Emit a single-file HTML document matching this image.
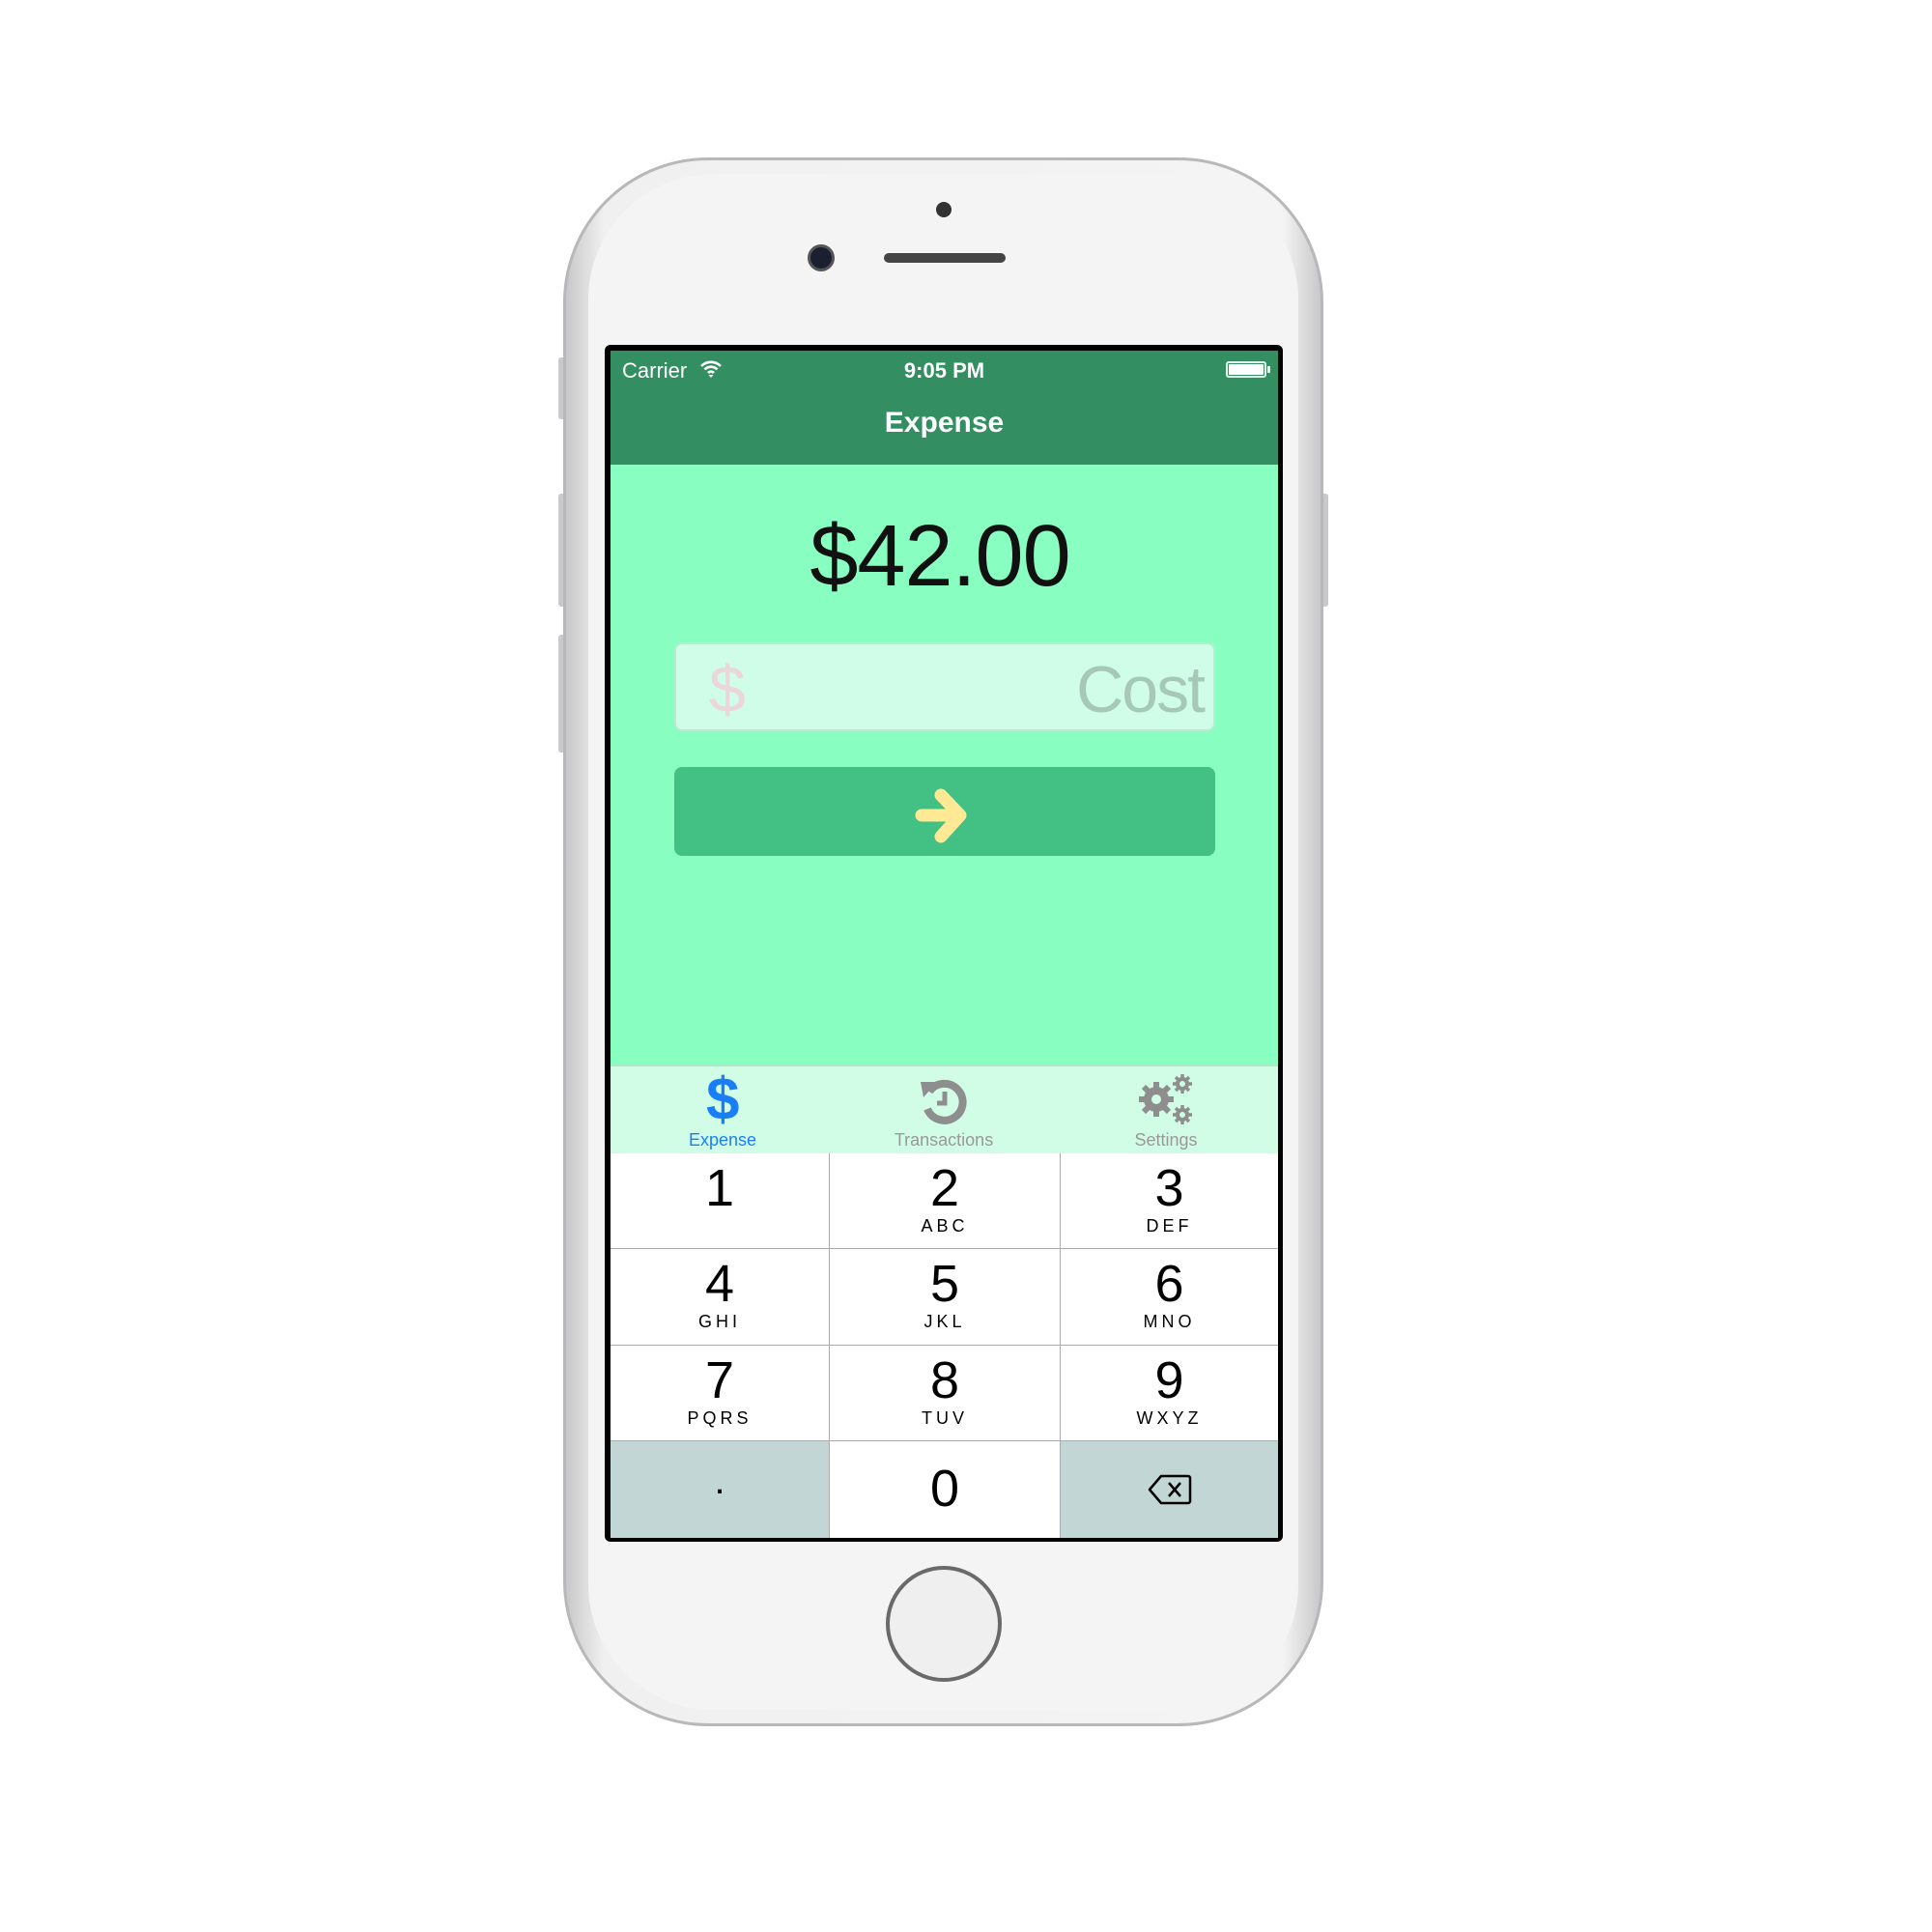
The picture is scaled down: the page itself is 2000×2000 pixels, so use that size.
<!DOCTYPE html>
<html><head><meta charset="utf-8"><style>
*{margin:0;padding:0;box-sizing:border-box}
body{width:2000px;height:2000px;background:#fff;position:relative;overflow:hidden;font-family:"Liberation Sans",sans-serif}
.abs{position:absolute}
.phone{left:583px;top:163px;width:787px;height:1624px;border-radius:150px;background:linear-gradient(90deg,#c8c8ca,#f0f0f0 5%,#f4f4f4 95%,#c8c8ca);border:3px solid #b8b8ba}
.phone2{left:609px;top:180px;width:735px;height:1590px;border-radius:130px;background:#f3f4f3}
.btn{background:#c9c9cb;border-radius:3px}
.screen{left:626px;top:357px;width:702px;height:1239px;background:#000;border-radius:6px}
.key{position:absolute;background:#fff;text-align:center;color:#000}
.key .n{font-size:54px;line-height:54px;margin-top:9px}
.key .l{font-size:18px;letter-spacing:4px;margin-top:2px}
</style></head><body>
<div class="abs btn" style="left:578px;top:370px;width:8px;height:64px"></div>
<div class="abs btn" style="left:578px;top:511px;width:8px;height:117px"></div>
<div class="abs btn" style="left:578px;top:657px;width:8px;height:122px"></div>
<div class="abs btn" style="left:1367px;top:511px;width:8px;height:117px"></div>
<div class="abs phone"></div>
<div class="abs phone2"></div>
<div class="abs" style="left:969px;top:209px;width:16px;height:16px;border-radius:50%;background:#333"></div>
<div class="abs" style="left:836px;top:253px;width:28px;height:28px;border-radius:50%;background:#1a2030;border:3px solid #555"></div>
<div class="abs" style="left:915px;top:262px;width:126px;height:10px;border-radius:5px;background:#444"></div>
<div class="abs" style="left:917px;top:1621px;width:120px;height:120px;border-radius:50%;border:4px solid #6a6a6a;background:#efefef"></div>
<div class="abs screen"></div>
<div class="abs" style="left:632px;top:363px;width:691px;height:1229px;overflow:hidden;background:#88ffc0">
  <div class="abs" style="left:0;top:0;width:691px;height:118px;background:#338f61;color:#fff">
    <div class="abs" style="left:12px;top:8px;font-size:22px">Carrier</div>
    <svg class="abs" style="left:92px;top:9px" width="24" height="20" viewBox="0 0 24 20"><path d="M2 7a14 14 0 0 1 20 0M5.5 10.5a9 9 0 0 1 13 0M9 14a4 4 0 0 1 6 0" stroke="#fff" stroke-width="2.6" fill="none"/><path d="M9.5 16l2.5 3 2.5-3z" fill="#fff"/></svg>
    <div class="abs" style="left:0;width:691px;top:8px;text-align:center;font-size:22px;font-weight:bold">9:05 PM</div>
    <div class="abs" style="left:637px;top:11px;width:42px;height:17px;border:2px solid #dfe;border-radius:3px;padding:1px"><div style="background:#fff;height:100%;border-radius:1px"></div></div>
    <div class="abs" style="left:680px;top:16px;width:3px;height:7px;background:#dfe"></div>
    <div class="abs" style="left:0;width:691px;top:58px;text-align:center;font-size:30px;font-weight:bold">Expense</div>
  </div>
  <div class="abs" style="left:0;width:682px;top:162px;text-align:center;font-size:90px;color:#111;letter-spacing:-1px">$42.00</div>
  <div class="abs" style="left:66px;top:302px;width:560px;height:92px;background:#d0fde7;border:2px solid #b6eccf;border-radius:8px">
    <div class="abs" style="left:34px;top:8px;font-size:68px;color:#ecd6dc">$</div>
    <div class="abs" style="right:10px;top:8px;font-size:68px;color:#a5c8b7;letter-spacing:-2px">Cost</div>
  </div>
  <div class="abs" style="left:66px;top:431px;width:560px;height:92px;background:#43c084;border-radius:8px">
    <svg class="abs" style="left:248px;top:17px" width="62" height="62" viewBox="0 0 62 62"><path d="M8 33H42M28 12L48 33L28 55" stroke="#ffe994" stroke-width="13" fill="none" stroke-linejoin="round" stroke-linecap="round"/></svg>
  </div>
  <div class="abs" style="left:0;top:739px;width:691px;height:92px;background:#d1fde7;border-top:2px solid #aee8c9">
    <div class="abs" style="left:99px;top:4px;font-size:62px;font-weight:bold;color:#1a7ff6;line-height:62px">$</div>
    <div class="abs" style="left:36px;width:160px;top:66px;text-align:center;font-size:18px;color:#1a7ff6">Expense</div>
    <svg class="abs" style="left:318px;top:8px" width="54" height="54" viewBox="0 0 54 54"><path d="M12 18A19 19 0 1 1 10 36" stroke="#8e8e8e" stroke-width="8" fill="none"/><path d="M3 8L20 8L6 24Z" fill="#8e8e8e"/><path d="M28 18V30H20" stroke="#8e8e8e" stroke-width="5" fill="none"/></svg>
    <div class="abs" style="left:265px;width:160px;top:66px;text-align:center;font-size:18px;color:#999">Transactions</div>
    <svg class="abs" style="left:545px;top:6px" width="60" height="56" viewBox="0 0 60 56"><g fill="#8e8e8e"><circle cx="20" cy="28" r="13"/><circle cx="47" cy="12" r="7"/><circle cx="47" cy="44" r="7"/></g><g stroke="#8e8e8e" stroke-width="6"><path d="M20 10V46M2 28H38M7 15L33 41M33 15L7 41"/></g><g stroke="#8e8e8e" stroke-width="3.5"><path d="M47 2V22M37 12H57M40 5L54 19M54 5L40 19M47 34V54M37 44H57M40 37L54 51M54 37L40 51"/></g><g fill="#d1fde7"><circle cx="20" cy="28" r="5"/><circle cx="47" cy="12" r="3"/><circle cx="47" cy="44" r="3"/></g></svg>
    <div class="abs" style="left:495px;width:160px;top:66px;text-align:center;font-size:18px;color:#999">Settings</div>
  </div>
  <div class="abs" style="left:0;top:831px;width:691px;height:398px;background:#aaa">
    <div class="key" style="left:0;top:0;width:226px;height:98px"><div class="n">1</div></div>
    <div class="key" style="left:227px;top:0;width:238px;height:98px"><div class="n">2</div><div class="l">ABC</div></div>
    <div class="key" style="left:466px;top:0;width:225px;height:98px"><div class="n">3</div><div class="l">DEF</div></div>
    <div class="key" style="left:0;top:99px;width:226px;height:99px"><div class="n">4</div><div class="l">GHI</div></div>
    <div class="key" style="left:227px;top:99px;width:238px;height:99px"><div class="n">5</div><div class="l">JKL</div></div>
    <div class="key" style="left:466px;top:99px;width:225px;height:99px"><div class="n">6</div><div class="l">MNO</div></div>
    <div class="key" style="left:0;top:199px;width:226px;height:98px"><div class="n">7</div><div class="l">PQRS</div></div>
    <div class="key" style="left:227px;top:199px;width:238px;height:98px"><div class="n">8</div><div class="l">TUV</div></div>
    <div class="key" style="left:466px;top:199px;width:225px;height:98px"><div class="n">9</div><div class="l">WXYZ</div></div>
    <div class="key" style="left:0;top:298px;width:226px;height:100px;background:#c2d7d5"><div class="n" style="margin-top:14px;font-size:40px">.</div></div>
    <div class="key" style="left:227px;top:298px;width:238px;height:100px"><div class="n" style="margin-top:22px">0</div></div>
    <div class="key" style="left:466px;top:298px;width:225px;height:100px;background:#c2d7d5">
      <svg style="margin-top:34px" width="46" height="32" viewBox="0 0 46 32"><path d="M14 2H42a2 2 0 0 1 2 2V28a2 2 0 0 1-2 2H14L2 16Z" stroke="#000" stroke-width="2.5" fill="none" stroke-linejoin="round"/><path d="M22 9L34 23M34 9L22 23" stroke="#000" stroke-width="2.5"/></svg>
    </div>
  </div>
</div>
</body></html>
